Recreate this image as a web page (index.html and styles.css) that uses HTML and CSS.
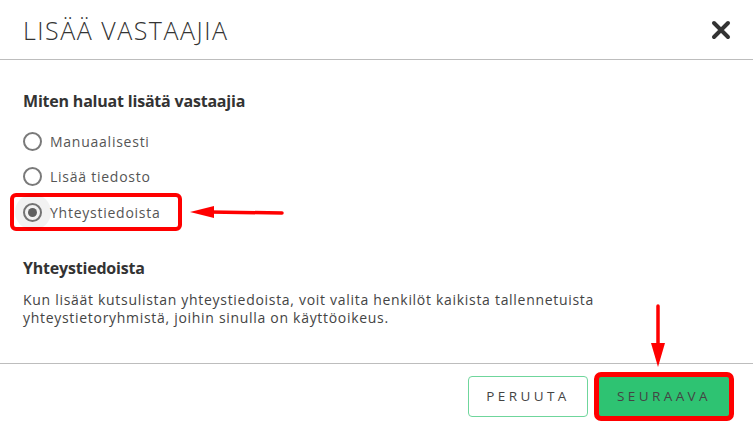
FILE: index.html
```html
<!DOCTYPE html>
<html lang="fi">
<head>
    <meta charset="UTF-8">
    <meta name="viewport" content="width=device-width, initial-scale=1.0">
    <title>Lisää vastaajia</title>
    <link rel="stylesheet" href="styles.css">
</head>
<body>

<div id="dialog">

    <div class="dlg-header">
        <h1>LISÄÄ VASTAAJIA</h1>
        <button class="close" type="button" aria-label="Sulje">
            <svg width="20" height="20" viewBox="0 0 20 20">
                <path d="M3 3 L17 17 M17 3 L3 17" stroke="#333" stroke-width="4" stroke-linecap="round"/>
            </svg>
        </button>
    </div>

    <div class="dlg-body">
        <h2>Miten haluat lisätä vastaajia</h2>

        <div class="options">
            <label class="option">
                <span class="radio"></span>
                <span>Manuaalisesti</span>
            </label>
            <label class="option">
                <span class="radio"></span>
                <span>Lisää tiedosto</span>
            </label>
            <label class="option selected marked">
                <span class="radio"><span class="dot"></span></span>
                <span>Yhteystiedoista</span>
            </label>
        </div>

        <h2 class="sub">Yhteystiedoista</h2>
        <p class="info">Kun lisäät kutsulistan yhteystiedoista, voit valita henkilöt kaikista tallennetuista yhteystietoryhmistä, joihin sinulla on käyttöoikeus.</p>
    </div>

    <div class="dlg-footer">
        <button type="button" class="btn btn-outline">PERUUTA</button>
        <span class="marked-btn">
            <button type="button" class="btn btn-green">SEURAAVA</button>
        </span>
    </div>

    <!-- annotation arrows -->
    <svg class="arrow arrow-left" width="100" height="14" viewBox="0 0 100 14">
        <path d="M22 7 L94 8" stroke="#f00" stroke-width="3.5" stroke-linecap="round"/>
        <polygon points="2,7 26,1 26,13" fill="#f00"/>
    </svg>
    <svg class="arrow arrow-down" width="16" height="66" viewBox="0 0 16 66">
        <path d="M8 3 L8 44" stroke="#f00" stroke-width="3.5" stroke-linecap="round"/>
        <polygon points="1,40 15,40 8,64" fill="#f00"/>
    </svg>

</div>

</body>
</html>
```

FILE: styles.css
```css
body {
    margin: 0;
    font-family: "Open Sans", "DejaVu Sans", sans-serif;
    color: #444;
    background: #fff;
}

#dialog {
    position: relative;
    width: 753px;
    height: 428px;
    overflow: hidden;
}

.dlg-header {
    height: 59px;
    border-bottom: 1px solid #bdbdbd;
    display: flex;
    align-items: center;
    justify-content: space-between;
    padding: 0 22px 0 23px;
}

.dlg-header h1 {
    margin: 0;
    font-size: 25px;
    font-weight: 300;
    letter-spacing: 1.5px;
    color: #333;
}

.close {
    border: none;
    background: none;
    padding: 0;
    width: 20px;
    height: 20px;
    cursor: pointer;
}

.dlg-body {
    padding: 30px 23px 0 23px;
    height: 273px;
}

h2 {
    margin: 0;
    font-size: 16px;
    font-weight: 700;
    color: #333;
    line-height: 22px;
    letter-spacing: -0.2px;
}

.options {
    margin-top: 12px;
    display: flex;
    flex-direction: column;
}

.option {
    display: flex;
    align-items: center;
    gap: 8px;
    height: 35px;
    font-size: 14px;
    letter-spacing: 0.75px;
    color: #555;
    position: relative;
    width: fit-content;
}

.radio {
    width: 19px;
    height: 19px;
    box-sizing: border-box;
    border: 2px solid #7a7a7a;
    border-radius: 50%;
    display: flex;
    align-items: center;
    justify-content: center;
    position: relative;
}

.selected .radio::before {
    content: "";
    position: absolute;
    width: 36px;
    height: 36px;
    border-radius: 50%;
    background: rgba(0, 0, 0, 0.05);
}

.dot {
    width: 9px;
    height: 9px;
    border-radius: 50%;
    background: #666;
}

/* red annotation box */
.marked {
    outline: 4px solid #f00;
    border-radius: 2px;
    margin-left: -9px;
    padding: 0 0 0 9px;
    width: 155px;
    height: 30px;
    margin-top: 3px;
}

h2.sub {
    margin-top: 30px;
}

.info {
    margin: 12px 0 0 0;
    font-size: 14px;
    letter-spacing: 0.7px;
    line-height: 18px;
    color: #444;
    max-width: 600px;
}

.dlg-footer {
    border-top: 1px solid #bdbdbd;
    height: 64px;
    display: flex;
    align-items: center;
    justify-content: flex-end;
    gap: 11px;
    padding: 0 24px 0 0;
}

.btn {
    height: 41px;
    font-family: "Open Sans", sans-serif;
    font-size: 13.5px;
    letter-spacing: 3.4px;
    color: #444;
    border-radius: 4px;
    cursor: pointer;
}

.btn-outline {
    width: 120px;
    background: #fff;
    border: 1px solid #6fd69c;
}

.marked-btn {
    display: flex;
    outline: 5px solid #f00;
    border-radius: 2px;
}

.btn-green {
    width: 130px;
    height: 39px;
    background: #2ec372;
    border: none;
    border-radius: 0;
}

.arrow {
    position: absolute;
}

.arrow-left {
    left: 188px;
    top: 205px;
}

.arrow-down {
    left: 650px;
    top: 303px;
}
```
